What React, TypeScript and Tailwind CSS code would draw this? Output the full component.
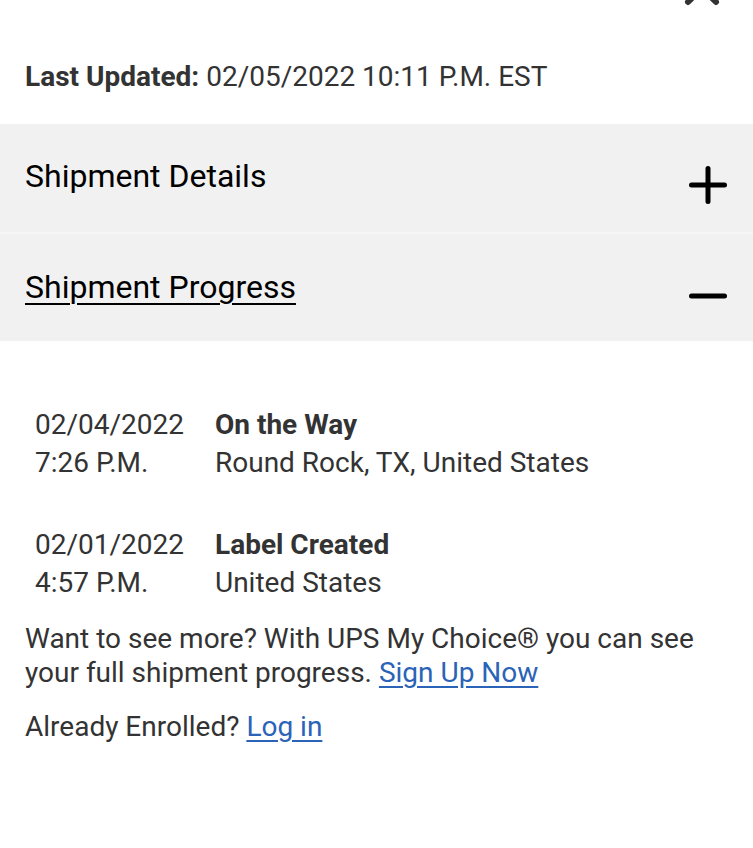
import React from "react";

export default function App() {
  return (
    <div className="w-[753px] h-[848px] bg-white overflow-hidden relative" style={{ fontFamily: "Roboto, 'Noto Sans', sans-serif" }}>
      <svg className="absolute left-[683px] top-[-31px]" width="38" height="38" viewBox="0 0 38 38">
        <path d="M5 5 L33 33 M33 5 L5 33" stroke="#333" strokeWidth="6" strokeLinecap="round" />
      </svg>
      <div className="h-[124px] flex items-center pl-[25px] pt-[30px] text-[28px] text-[#333]">
        <span className="font-bold">Last Updated:</span>
        <span className="ml-[7px]">02/05/2022 10:11 P.M. EST</span>
      </div>
      <div className="bg-[#f1f1f1] h-[108px] flex items-center justify-between pl-[25px] pr-[26px]">
        <span className="text-[32px] text-black -mt-[4px]">Shipment Details</span>
        <svg width="38" height="38" viewBox="0 0 38 38" className="mt-[14px]">
          <path d="M19 2.5 V35.5 M2.5 19 H35.5" stroke="#000" strokeWidth="5" strokeLinecap="round" />
        </svg>
      </div>
      <div className="h-[2px] bg-[#f6f6f6]" />
      <div className="bg-[#f1f1f1] h-[107px] flex items-center justify-between pl-[25px] pr-[26px]">
        <span className="text-[32px] text-black underline underline-offset-[5px] decoration-[2px] -mt-[1px]">Shipment Progress</span>
        <svg width="38" height="38" viewBox="0 0 38 38" className="mt-[17px]">
          <path d="M2.5 19 H35.5" stroke="#000" strokeWidth="5" strokeLinecap="round" />
        </svg>
      </div>
      <div className="pt-[65px] pl-[35px] text-[28px] text-[#333] leading-[38px]">
        <div className="flex">
          <div className="w-[180px]">
            <div>02/04/2022</div>
            <div>7:26 P.M.</div>
          </div>
          <div>
            <div className="font-bold">On the Way</div>
            <div>Round Rock, TX, United States</div>
          </div>
        </div>
        <div className="flex mt-[44px]">
          <div className="w-[180px]">
            <div>02/01/2022</div>
            <div>4:57 P.M.</div>
          </div>
          <div>
            <div className="font-bold">Label Created</div>
            <div>United States</div>
          </div>
        </div>
      </div>
      <div className="pl-[25px] pr-[30px] pt-[20px] text-[28px] text-[#333] leading-[34px]">
        <p>
          Want to see more? With UPS My Choice® you can see your full shipment progress.{" "}
          <a className="text-[#2a63b7] underline underline-offset-[4px]" href="#">Sign Up Now</a>
        </p>
        <p className="mt-[20px]">
          Already Enrolled? <a className="text-[#2a63b7] underline underline-offset-[4px]" href="#">Log in</a>
        </p>
      </div>
    </div>
  );
}
